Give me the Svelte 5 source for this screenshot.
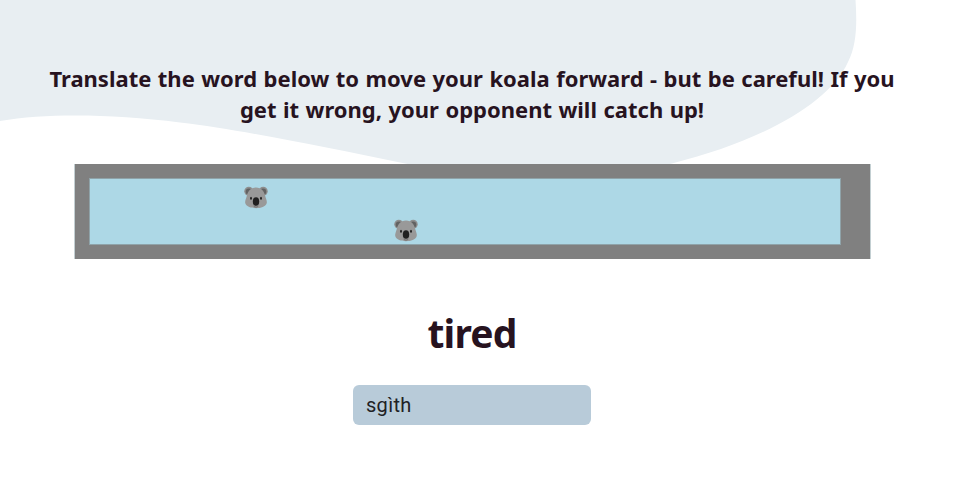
<script>
  const lines = [
    'Translate the word below to move your koala forward - but be careful! If you',
    'get it wrong, your opponent will catch up!'
  ];
  const koalas = [{ position: 154 }, { position: 304 }];
  let answer = $state('sgìth');
</script>

<main>
  <svg class="blob" width="962" height="240" viewBox="0 0 962 240" aria-hidden="true">
    <path d="M0 0H855.5C857 22 857 45 848 62C829 104 761 141 672 163.500C578 187 493 181 405 163.500C324 147 243 130 180 122.500C112 114 48 113 0 121Z" fill="#e8eef2" />
  </svg>

  <h2>
    {#each lines as line}
      <span class="line">{line}</span>
    {/each}
  </h2>

  <section class="board">
    <div class="track">
      {#each koalas as koala}
        <div class="lane">
          <svg class="koala" style="margin-left: {koala.position}px" width="24" height="24" viewBox="0 0 24 24" role="img" aria-label="koala">
            <circle cx="4.800" cy="5.200" r="4.500" fill="#8e8e8e" />
            <circle cx="19.200" cy="5.200" r="4.500" fill="#8e8e8e" />
            <circle cx="4.900" cy="5.600" r="3.200" fill="#626262" />
            <circle cx="19.100" cy="5.600" r="3.200" fill="#626262" />
            <path d="M12 1.500C17.500 1.500 20.200 5.500 21.200 10C22 13 23.300 15.300 22.700 17.300C21.500 20.800 17 22.200 12 22.200S2.500 20.800 1.300 17.300C.7 15.300 2 13 2.800 10C3.800 5.500 6.500 1.500 12 1.500Z" fill="#999" />
            <ellipse cx="7" cy="12.200" rx="1" ry="1.500" fill="#282828" />
            <ellipse cx="17" cy="12.200" rx="1" ry="1.500" fill="#282828" />
            <path d="M9.600 20C11 21.500 13 21.500 14.400 20" fill="none" stroke="#626262" stroke-width=".8" />
            <ellipse cx="12" cy="15.500" rx="3.200" ry="4.300" fill="#202020" />
          </svg>
        </div>
      {/each}
    </div>
  </section>

  <h1>tired</h1>
  <input type="text" aria-label="Translation" spellcheck="false" bind:value={answer} />
</main>

<style>
  :global(body) { margin: 0; background: #fff; }
  main {
    position: relative;
    display: flex;
    flex-direction: column;
    align-items: center;
    box-sizing: border-box;
    width: 962px;
    height: 481px;
    padding: 63px 18px 0 0;
    overflow: hidden;
    color: #27131f;
    font-family: "Noto Sans", "Open Sans", sans-serif;
  }
  .blob { position: absolute; top: 0; left: 0; }
  h2 {
    position: relative;
    margin: 0;
    height: 101px;
    font-size: 22px;
    font-weight: 700;
    line-height: 31px;
    text-align: center;
    word-spacing: .75px;
  }
  .line { display: block; white-space: nowrap; }
  .board {
    position: relative;
    box-sizing: border-box;
    width: 797px;
    height: 95px;
    margin-left: 1px;
    padding: 14px 30px 14px 14px;
    border: solid #c3cfd2;
    border-width: 0 1px;
    background: #808080;
  }
  .track {
    box-sizing: border-box;
    width: 752px;
    height: 67px;
    border: 1px solid #8fa3a9;
    background: #add8e6;
  }
  .lane { display: flex; height: 33px; padding-top: 7px; box-sizing: border-box; }
  .koala { display: block; flex: none; }
  h1 {
    margin: 47px 0 0;
    height: 79px;
    font-size: 39px;
    font-weight: 700;
    line-height: 54px;
    letter-spacing: -.8px;
  }
  input {
    box-sizing: border-box;
    width: 238px;
    height: 40px;
    padding: 0 13px;
    border: 0;
    border-radius: 6px;
    outline: none;
    background: #b8cbd9;
    color: #212124;
    font: 20px Roboto, sans-serif;
    letter-spacing: .3px;
  }
</style>
